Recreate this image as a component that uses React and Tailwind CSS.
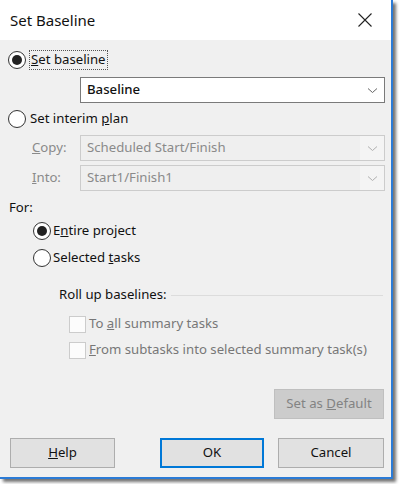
import React from "react";

const Radio = ({ checked }) => (
    <span className="w-[18px] h-[18px] rounded-full border border-[#333] bg-white flex items-center justify-center shrink-0">
        {checked && <span className="w-[10px] h-[10px] rounded-full bg-[#222]" />}
    </span>
);

const Check = () => (
    <span className="w-[17px] h-[17px] border border-[#cccccc] bg-[#fcfcfc] shrink-0" />
);

const Chevron = ({ color }) => (
    <svg width="11" height="7" viewBox="0 0 11 7">
        <path d="M1 1.5 L5.5 5.5 L10 1.5" fill="none" stroke={color} strokeWidth="1" />
    </svg>
);

const Combo = ({ text, disabled }) => (
    <div
        className={
            "w-[305px] h-[26px] flex items-center justify-between border " +
            (disabled ? "border-[#cccccc] bg-[#efefef]" : "border-[#7a7a7a] bg-white")
        }
    >
        <span className={"pl-[6px] " + (disabled ? "text-[#8a8a8a]" : "text-[#111] font-medium")}>{text}</span>
        <span className={"h-full w-[24px] flex items-center justify-center " + (disabled ? "bg-[#f4f4f4]" : "")}>
            <Chevron color={disabled ? "#b0b0b0" : "#666"} />
        </span>
    </div>
);

const Btn = ({ children, primary, disabled, className = "" }) => (
    <button
        className={
            "h-[30px] flex items-center justify-center " +
            (primary
                ? "border-2 border-[#0078d7] bg-[#e1e1e1] text-[#111]"
                : disabled
                ? "border border-[#bfbfbf] bg-[#cccccc] text-[#838383]"
                : "border border-[#adadad] bg-[#e1e1e1] text-[#111]") +
            " " + className
        }
    >
        <span>{children}</span>
    </button>
);

export default function App() {
    return (
        <div
            className="w-[399px] h-[484px] bg-white overflow-hidden text-[13.2px] text-[#111]"
            style={{ fontFamily: '"Noto Sans", "Open Sans", sans-serif' }}
        >
            <div className="w-[393px] h-[479px] flex flex-col border-r-2 border-b-2 border-[#2b7bd6] shadow-[3px_3px_3px_rgba(0,0,0,0.55)]">
                {/* title bar */}
                <div className="h-[40px] bg-white flex items-center justify-between pl-[10px] pr-[19px] shrink-0">
                    <span className="text-[15px] text-[#111] leading-none">Set Baseline</span>
                    <svg width="14" height="14" viewBox="0 0 14 14">
                        <path d="M0.5 0.5 L13.5 13.5 M13.5 0.5 L0.5 13.5" stroke="#222" strokeWidth="1.1" />
                    </svg>
                </div>

                {/* body */}
                <div className="flex-1 bg-[#f0f0f0] flex flex-col leading-none">
                    <div className="mt-[10px] h-[20px] flex items-center pl-[8px] gap-[3px]">
                        <Radio checked />
                        <span className="border border-dotted border-[#555] px-[1px] py-[2px]">
                            <u>S</u>et baseline
                        </span>
                    </div>

                    <div className="mt-[7px] pl-[80px]">
                        <Combo text="Baseline" />
                    </div>

                    <div className="mt-[6px] h-[20px] flex items-center pl-[8px] gap-[4px]">
                        <Radio />
                        <span>
                            Set interim <u>p</u>lan
                        </span>
                    </div>

                    <div className="mt-[6px] flex items-center">
                        <span className="w-[80px] pl-[32px] text-[#8a8a8a]">
                            <u>C</u>opy:
                        </span>
                        <Combo text="Scheduled Start/Finish" disabled />
                    </div>

                    <div className="mt-[4px] flex items-center">
                        <span className="w-[80px] pl-[32px] text-[#8a8a8a]">
                            <u>I</u>nto:
                        </span>
                        <Combo text="Start1/Finish1" disabled />
                    </div>

                    <div className="mt-[8px] h-[18px] flex items-center pl-[9px]">For:</div>

                    <div className="mt-[4px] h-[20px] flex items-center pl-[33px] gap-[2px]">
                        <Radio checked />
                        <span>
                            E<u>n</u>tire project
                        </span>
                    </div>

                    <div className="mt-[7px] h-[20px] flex items-center pl-[33px] gap-[2px]">
                        <Radio />
                        <span>
                            Selected <u>t</u>asks
                        </span>
                    </div>

                    <div className="mt-[18px] h-[18px] flex items-center pl-[59px] gap-[4px] pr-[8px]">
                        <span>Roll up baselines:</span>
                        <span className="flex-1 h-px bg-[#dcdcdc]" />
                    </div>

                    <div className="mt-[11px] h-[18px] flex items-center pl-[69px] gap-[3px] text-[#777]">
                        <Check />
                        <span>
                            To <u>a</u>ll summary tasks
                        </span>
                    </div>

                    <div className="mt-[8px] h-[18px] flex items-center pl-[69px] gap-[3px] text-[#777]">
                        <Check />
                        <span>
                            <u>F</u>rom subtasks into selected summary task(s)
                        </span>
                    </div>

                    <div className="mt-[30px] flex justify-end pr-[7px]">
                        <Btn disabled className="w-[110px] h-[29px]">
                            Set as <u>D</u>efault
                        </Btn>
                    </div>

                    <div className="mt-[19px] flex items-center pl-[10px] pr-[7px]">
                        <Btn className="w-[105px]">
                            <u>H</u>elp
                        </Btn>
                        <Btn primary className="w-[104px] ml-[45px]">
                            OK
                        </Btn>
                        <Btn className="w-[106px] ml-auto">Cancel</Btn>
                    </div>
                </div>
            </div>
        </div>
    );
}
